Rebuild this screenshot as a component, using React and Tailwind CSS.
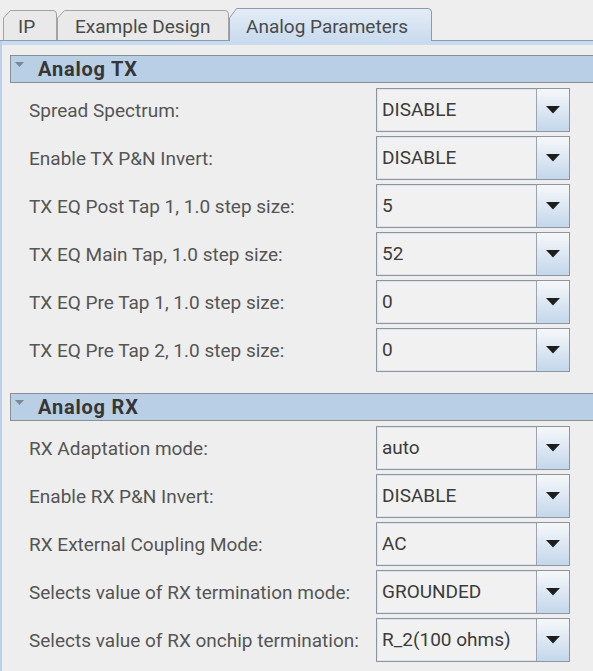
import React from "react";

const TX = [
  ["Spread Spectrum:", "DISABLE"],
  ["Enable TX P&N Invert:", "DISABLE"],
  ["TX EQ Post Tap 1, 1.0 step size:", "5"],
  ["TX EQ Main Tap, 1.0 step size:", "52"],
  ["TX EQ Pre Tap 1, 1.0 step size:", "0"],
  ["TX EQ Pre Tap 2, 1.0 step size:", "0"],
];
const RX = [
  ["RX Adaptation mode:", "auto"],
  ["Enable RX P&N Invert:", "DISABLE"],
  ["RX External Coupling Mode:", "AC"],
  ["Selects value of RX termination mode:", "GROUNDED"],
  ["Selects value of RX onchip termination:", "R_2(100 ohms)"],
];

function Tab({ w, h, label, selected, textLeft }) {
  const path = `M0.5,${h} L0.5,${h - 23} L7.5,0.5 L${w - 4},0.5 Q${w - 0.5},0.5 ${w - 0.5},4 L${w - 0.5},${h}`;
  return (
    <div className="relative shrink-0" style={{ width: w, height: h }}>
      <svg className="absolute inset-0" width={w} height={h}>
        <defs>
          <linearGradient id="selg" x1="0" y1="0" x2="0" y2="1">
            <stop offset="0" stopColor="#e4edf7" />
            <stop offset="1" stopColor="#c9dbee" />
          </linearGradient>
        </defs>
        <path
          d={path}
          fill={selected ? "url(#selg)" : "#e9e9e9"}
          stroke={selected ? "#8d9cad" : "#a3a3a3"}
          strokeWidth="1"
        />
        {!selected && <line x1="0" y1={h - 0.5} x2={w} y2={h - 0.5} stroke="#8d9cad" />}
      </svg>
      <span
        className="absolute text-[19px] text-[#4a4a4a] leading-[24px] whitespace-nowrap"
        style={{ left: textLeft, top: h - 26 }}
      >
        {label}
      </span>
    </div>
  );
}

function Combo({ value }) {
  return (
    <div className="w-[194px] h-[44px] flex border border-[#8b96a2] bg-[#f1f1f1] shadow-[inset_0_0_0_1px_#dfe4ea]">
      <div className="flex-1 flex items-center pl-[5px] text-[19px] text-[#3c3c3c]">{value}</div>
      <div className="w-[33px] border-l border-[#9aa5b1] flex items-center justify-center bg-gradient-to-b from-[#f6f8fa] to-[#c3d7eb]">
        <svg width="14" height="8" viewBox="0 0 14 8">
          <path d="M0,0 L14,0 L7,7.5 Z" fill="#1e1e1e" />
        </svg>
      </div>
    </div>
  );
}

function Header({ title }) {
  return (
    <div className="ml-[8px] h-[28px] border border-r-0 border-[#8a8f95] bg-[#b9cfe5] flex items-center">
      <svg className="ml-[4px] self-start mt-[6px]" width="9" height="5" viewBox="0 0 9 5">
        <path d="M0,0 L9,0 L4.5,5 Z" fill="#7c8794" />
      </svg>
      <span className="ml-[14px] font-bold text-[20px] text-[#363636] tracking-[0.8px]">{title}</span>
    </div>
  );
}

function Row({ label, value }) {
  return (
    <div className="h-[48px] flex items-center">
      <div className="w-[374px] pl-[27px] pt-[2px] text-[19px] text-[#555555] whitespace-nowrap">{label}</div>
      <Combo value={value} />
    </div>
  );
}

export default function App() {
  return (
    <div
      className="w-[593px] h-[671px] bg-[#eeeeee] overflow-hidden"
      style={{ fontFamily: "Roboto, 'Noto Sans', sans-serif" }}
    >
      <div className="h-[41px] flex items-end">
        <div className="w-[3px] h-[1px] bg-[#8d9cad]" />
        <Tab w={54} h={31} label="IP" textLeft={15} />
        <Tab w={172} h={31} label="Example Design" textLeft={18} />
        <Tab w={203} h={33} label="Analog  Parameters" textLeft={17} selected />
        <div className="flex-1 h-[1px] bg-[#8d9cad]" />
      </div>
      <div className="h-[630px] border-l-[2px] border-[#b9d0ea]">
        <div className="h-[4px] bg-[#c9dbee]" />
        <div className="pt-[10px]">
          <Header title="Analog TX" />
          <div className="pt-[3px]">
            {TX.map(([l, v]) => (
              <Row key={l} label={l} value={v} />
            ))}
          </div>
          <div className="pt-[19px]">
            <Header title="Analog RX" />
          </div>
          <div className="pt-[3px]">
            {RX.map(([l, v]) => (
              <Row key={l} label={l} value={v} />
            ))}
          </div>
        </div>
      </div>
    </div>
  );
}
